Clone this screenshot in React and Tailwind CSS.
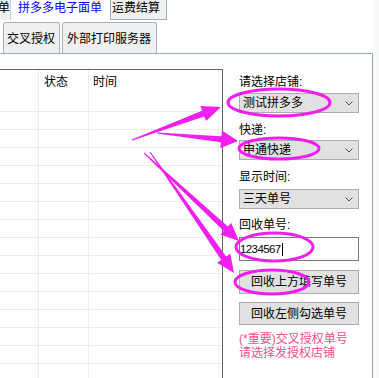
import React from "react";

function arrowPoints(tail, tip, headLen, headHalf, t0, t1) {
  const dx = tip[0] - tail[0];
  const dy = tip[1] - tail[1];
  const len = Math.hypot(dx, dy);
  const ux = dx / len, uy = dy / len;
  const nx = -uy, ny = ux;
  const bx = tip[0] - ux * headLen, by = tip[1] - uy * headLen;
  const p = (x, y) => `${x.toFixed(1)},${y.toFixed(1)}`;
  return [
    p(tail[0] + nx * t0, tail[1] + ny * t0),
    p(bx + nx * t1, by + ny * t1),
    p(bx + nx * headHalf, by + ny * headHalf),
    p(tip[0], tip[1]),
    p(bx - nx * headHalf, by - ny * headHalf),
    p(bx - nx * t1, by - ny * t1),
    p(tail[0] - nx * t0, tail[1] - ny * t0),
  ].join(" ");
}

function Chevron() {
  return (
    <svg width="8" height="5" viewBox="0 0 8 5" className="mr-[5px]">
      <path d="M0.5 0.5 L4 4 L7.5 0.5" fill="none" stroke="#505050" strokeWidth="1" />
    </svg>
  );
}

function Combo({ text }) {
  return (
    <div className="flex h-[20px] w-[120px] items-center justify-between border border-[#adadad] bg-[#e1e1e1] pl-[3px]">
      <span>{text}</span>
      <Chevron />
    </div>
  );
}

export default function App() {
  const rows = Array.from({ length: 16 });
  const M = "#f01ff0";
  return (
    <div className="relative flex h-[378px] w-[379px] overflow-hidden bg-white font-['Liberation_Sans','Noto_Sans_CJK_SC',sans-serif] text-[12px] leading-[14px] text-black">
      <div className="flex w-[373px] flex-col">
        {/* tab row 1 */}
        <div className="flex h-[20px]">
          <div className="flex w-[11px] justify-end overflow-hidden border-r border-[#c8d2da] bg-[#f0f0f0] pt-[1px]">
            <span className="whitespace-nowrap">单</span>
          </div>
          <div className="w-[100px] border-r border-[#9fb0bd] bg-white pl-[7px] pt-[1px] text-[#0000ff]">
            拼多多电子面单
          </div>
          <div className="w-[56px] border-r border-b border-[#9fb0bd] bg-[#f0f0f0] pl-[1px] pt-[1px]">
            运费结算
          </div>
        </div>
        {/* tab row 2 */}
        <div className="flex h-[33px] items-end gap-[2px] pl-[3px]">
          <div className="h-[31px] w-[57px] rounded-t-[3px] border border-b-0 border-[#a3b2be] bg-[#f0f0f0] pl-[3px] pt-[9px]">
            交叉授权
          </div>
          <div className="h-[31px] w-[95px] rounded-t-[3px] border border-b-0 border-[#a3b2be] bg-[#f0f0f0] pl-[4px] pt-[9px]">
            外部打印服务器
          </div>
        </div>
        {/* panel */}
        <div className="flex flex-1 overflow-hidden border-t border-r border-[#9aabb8] bg-white">
          {/* list */}
          <div className="mt-[15px] w-[223px] shrink-0 border-t border-r border-[#646464]">
            <div className="flex h-[24px]">
              <div className="w-[39px] border-r border-[#ececec]" />
              <div className="flex w-[50px] items-center border-r border-[#ececec] pl-[5px]">状态</div>
              <div className="flex w-[130px] items-center border-r border-[#ececec] pl-[4px]">时间</div>
            </div>
            {rows.map((_, i) => (
              <div key={i} className="flex h-[18px] border-b border-[#ececec]">
                <div className="w-[39px] border-r border-[#ececec]" />
                <div className="w-[50px] border-r border-[#ececec]" />
                <div className="w-[130px] border-r border-[#ececec]" />
              </div>
            ))}
          </div>
          {/* form */}
          <div className="flex flex-col pl-[16px]">
            <div className="mt-[21px]">请选择店铺:</div>
            <div className="mt-[4px]"><Combo text="测试拼多多" /></div>
            <div className="mt-[10px]">快递:</div>
            <div className="mt-[3px]"><Combo text="申通快递" /></div>
            <div className="mt-[10px]">显示时间:</div>
            <div className="mt-[5px]"><Combo text="三天单号" /></div>
            <div className="mt-[9px]">回收单号:</div>
            <div className="mt-[5px] flex h-[24px] w-[120px] items-center border border-[#7a7a7a] bg-white">
              <span className="text-[11.5px] tracking-[-0.6px]">1234567</span>
              <span className="ml-[1px] h-[13px] w-[1px] bg-black" />
            </div>
            <div className="mt-[9px] flex h-[24px] w-[120px] items-center justify-center border border-[#adadad] bg-[#e1e1e1]">
              回收上方填写单号
            </div>
            <div className="mt-[8px] flex h-[23px] w-[120px] items-center justify-center border border-[#adadad] bg-[#e1e1e1]">
              回收左侧勾选单号
            </div>
            <div className="mt-[7px] text-[#f5508a]">
              <div>(*重要)交叉授权单号</div>
              <div>请选择发授权店铺</div>
            </div>
          </div>
        </div>
      </div>
      <div className="w-[6px] bg-[#f8f8f8]" />

      {/* annotations */}
      <svg className="pointer-events-none absolute left-0 top-0" width="379" height="378" viewBox="0 0 379 378">
        <g fill="none" stroke={M} strokeWidth="3">
          <ellipse cx="279" cy="102.5" rx="51" ry="13.5" />
          <ellipse cx="279" cy="148.5" rx="40" ry="10.5" />
          <ellipse cx="274.5" cy="247" rx="38.5" ry="14" />
          <ellipse cx="272" cy="282" rx="37" ry="12" />
        </g>
        <g fill={M}>
          <polygon points={arrowPoints([132, 140], [221, 107], 19, 8, 0.5, 3)} />
          <polygon points={arrowPoints([157, 133], [238, 141], 17, 9, 0.5, 3)} />
          <polygon points={arrowPoints([144, 153], [239, 241], 18, 8, 0.5, 3)} />
          <polygon points={arrowPoints([150, 152], [234, 273], 18, 8, 0.5, 3)} />
        </g>
      </svg>
    </div>
  );
}
